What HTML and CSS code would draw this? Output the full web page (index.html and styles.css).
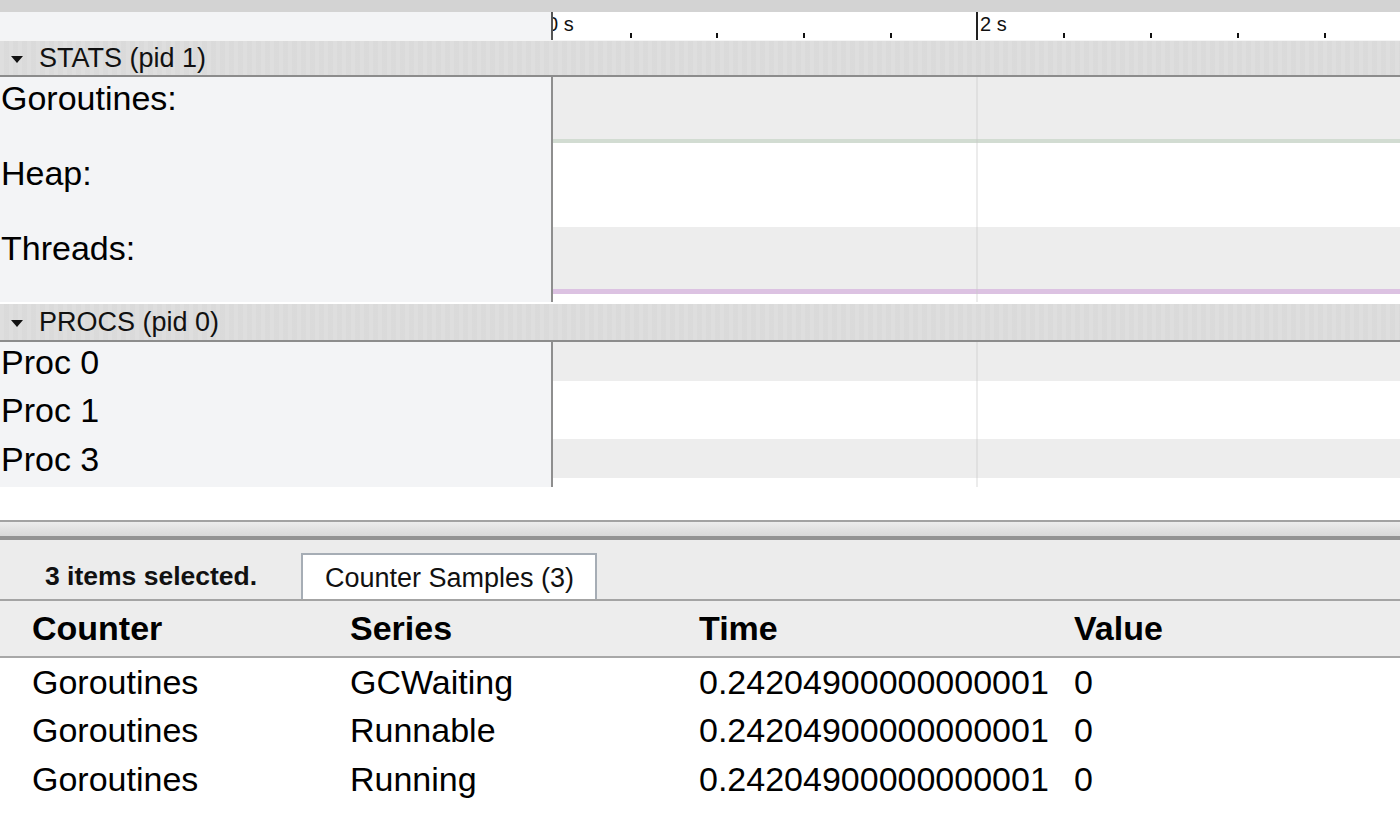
FILE: index.html
```html
<!DOCTYPE html>
<html>
<head>
<meta charset="utf-8">
<link rel="stylesheet" href="styles.css">
</head>
<body>
<div class="app">
  <div class="topbar"></div>
  <div class="ruler">
    <div class="ruler-left"></div>
    <div class="ruler-canvas">
      <span class="major" style="left:-10px"></span><span class="tick-label" style="left:-6px">0 s</span>
      <span class="minor" style="left:77px"></span>
      <span class="minor" style="left:163px"></span>
      <span class="minor" style="left:250px"></span>
      <span class="minor" style="left:337px"></span>
      <span class="major" style="left:423px"></span><span class="tick-label" style="left:427px">2 s</span>
      <span class="minor" style="left:510px"></span>
      <span class="minor" style="left:597px"></span>
      <span class="minor" style="left:684px"></span>
      <span class="minor" style="left:771px"></span>
    </div>
  </div>

  <div class="timeline">
    <div class="group-header stats-header"><span class="tri"></span>STATS (pid 1)</div>
    <div class="track counter">
      <div class="label">Goroutines:</div>
      <div class="area"><div class="fill grey"></div><div class="series green"></div><div class="rest"></div></div>
    </div>
    <div class="track counter">
      <div class="label">Heap:</div>
      <div class="area"></div>
    </div>
    <div class="track counter">
      <div class="label">Threads:</div>
      <div class="area"><div class="fill grey"></div><div class="series purple"></div><div class="rest"></div></div>
    </div>

    <div class="group-header procs-header"><span class="tri"></span>PROCS (pid 0)</div>
    <div class="track proc p0">
      <div class="label">Proc 0</div>
      <div class="area"><div class="fill grey"></div><div class="rest"></div></div>
    </div>
    <div class="track proc p1">
      <div class="label">Proc 1</div>
      <div class="area"></div>
    </div>
    <div class="track proc p3">
      <div class="label">Proc 3</div>
      <div class="area"><div class="fill grey"></div><div class="rest"></div></div>
    </div>
    <div class="timeline-rest"></div>
  </div>

  <div class="divider"></div>

  <div class="analysis">
    <div class="tabbar">
      <div class="selected-count">3 items selected.</div>
      <div class="tab">Counter Samples (3)</div>
    </div>
    <div class="table-wrap">
      <table class="samples">
        <colgroup>
          <col class="c1"><col class="c2"><col class="c3"><col class="c4">
        </colgroup>
        <thead>
          <tr><th>Counter</th><th>Series</th><th>Time</th><th>Value</th></tr>
        </thead>
        <tbody>
          <tr><td>Goroutines</td><td>GCWaiting</td><td>0.24204900000000001</td><td>0</td></tr>
          <tr><td>Goroutines</td><td>Runnable</td><td>0.24204900000000001</td><td>0</td></tr>
          <tr><td>Goroutines</td><td>Running</td><td>0.24204900000000001</td><td>0</td></tr>
        </tbody>
      </table>
    </div>
  </div>
</div>
</body>
</html>
```
FILE: styles.css
```css
* { box-sizing: border-box; }
html, body {
  margin: 0;
  padding: 0;
  width: 1400px;
  height: 822px;
  overflow: hidden;
  background: #fff;
  font-family: "Liberation Sans", Arial, Helvetica, sans-serif;
  color: #000;
}
.app {
  display: flex;
  flex-direction: column;
  height: 822px;
}
.topbar {
  height: 12px;
  background: #d3d3d3;
  flex: none;
}
.ruler {
  height: 28px;
  display: flex;
  flex: none;
}
.ruler-left {
  width: 553px;
  background: #f3f4f6;
  border-right: 2px solid #555;
  flex: none;
}
.ruler-canvas {
  position: relative;
  flex: 1;
  overflow: hidden;
  background: #fff;
}
.ruler-canvas .major {
  position: absolute;
  top: 0;
  width: 2px;
  height: 28px;
  background: #222;
}
.ruler-canvas .minor {
  position: absolute;
  top: 21px;
  width: 2px;
  height: 5px;
  background: #111;
}
.ruler-canvas .tick-label {
  position: absolute;
  top: 1px;
  font-size: 20px;
  line-height: 22px;
  color: #111;
  white-space: nowrap;
}

.timeline {
  display: flex;
  flex-direction: column;
  flex: none;
}
.group-header {
  display: flex;
  align-items: center;
  padding-left: 11px;
  background-color: #dcdcdc;
  background-image: repeating-linear-gradient(to right, rgba(255,255,255,0.06) 0, rgba(255,255,255,0.06) 4px, rgba(0,0,0,0.008) 4px, rgba(0,0,0,0.008) 9px);
  border-bottom: 2px solid #8c8c8c;
  font-size: 27px;
  color: #111;
  flex: none;
  white-space: nowrap;
}
.stats-header {
  height: 37px;
  border-top: 1px solid #f4f4f4;
}
.procs-header {
  height: 40px;
  border-top: 2px solid #fff;
}
.tri {
  width: 0;
  height: 0;
  border-left: 6.5px solid transparent;
  border-right: 6.5px solid transparent;
  border-top: 7px solid #111;
  margin-right: 16px;
  margin-top: 2px;
}
.track {
  display: flex;
  flex: none;
}
.track.counter { height: 75px; }
.track.p0 { height: 48px; }
.track.p1 { height: 49px; }
.track.p3 { height: 48px; }
.label {
  width: 553px;
  flex: none;
  background: #f3f4f6;
  border-right: 2px solid #8e8e8e;
  font-size: 34px;
  line-height: 38px;
  padding-left: 1px;
  padding-top: 2px;
  white-space: nowrap;
}
.track.proc .label { padding-top: 1px; }
.area {
  flex: 1;
  position: relative;
  display: flex;
  flex-direction: column;
  background: #fff;
}
.area::after {
  content: "";
  position: absolute;
  top: 0;
  bottom: 0;
  left: 423px;
  width: 2px;
  background: rgba(200,200,200,0.35);
}
.fill.grey { background: #ededed; }
.counter .fill { height: 62px; }
.proc .fill { height: 39px; }
.series { height: 4px; }
.series.green { background: #d2dcd2; }
.series.purple { background: #dcc2e2; height: 5px; }
.rest { flex: 1; background: #fff; }

.timeline-rest {
  height: 33px;
  background: #fff;
}
.divider {
  flex: none;
  height: 20px;
  border-top: 2px solid #a2a2a2;
  border-bottom: 4px solid #939393;
  background: linear-gradient(to bottom, #ececec, #d8d8d8);
}
.analysis {
  flex: 1;
  display: flex;
  flex-direction: column;
  background: #ececec;
}
.tabbar {
  height: 61px;
  flex: none;
  display: flex;
  align-items: flex-end;
  border-bottom: 2px solid #a4a4a4;
}
.selected-count {
  font-weight: bold;
  font-size: 26.5px;
  height: 46px;
  line-height: 46px;
  padding-left: 45px;
  width: 301px;
  flex: none;
  color: #111;
  white-space: nowrap;
}
.tab {
  height: 46px;
  line-height: 46px;
  background: #fff;
  border: 2px solid #a6adb5;
  border-bottom: none;
  padding: 0 20px 0 22px;
  font-size: 27px;
  color: #111;
  width: 296px;
  white-space: nowrap;
}
.table-wrap {
  flex: 1;
  background: #fff;
}
.samples {
  border-collapse: collapse;
  width: 100%;
  table-layout: fixed;
  font-size: 34px;
}
.samples col.c1 { width: 350px; }
.samples col.c2 { width: 349px; }
.samples col.c3 { width: 375px; }
.samples th {
  text-align: left;
  font-weight: bold;
  background: #ededed;
  height: 56px;
  border-bottom: 2px solid #a8a8a8;
  padding: 0;
  vertical-align: middle;
}
.samples td {
  height: 49px;
  padding: 0;
  white-space: nowrap;
  vertical-align: middle;
}
.samples th:first-child, .samples td:first-child { padding-left: 32px; }
```
